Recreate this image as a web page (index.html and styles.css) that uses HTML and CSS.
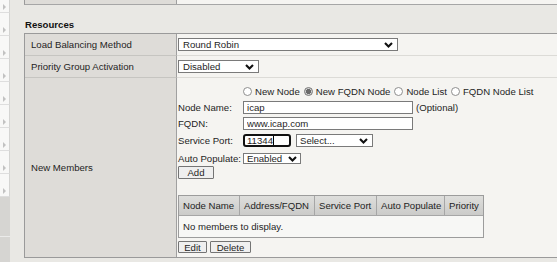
FILE: index.html
```html
<!DOCTYPE html>
<html lang="en">
<head>
<meta charset="utf-8">
<title>Resources</title>
<link rel="stylesheet" href="styles.css">
</head>
<body>
<div class="page">
  <nav class="sidebar">
    <div class="nav-item"><span class="arrow"></span></div>
    <div class="nav-item"><span class="arrow"></span></div>
    <div class="nav-item"><span class="arrow"></span></div>
    <div class="nav-item"><span class="arrow"></span></div>
    <div class="nav-item"><span class="arrow"></span></div>
    <div class="nav-item"><span class="arrow"></span></div>
    <div class="nav-item"><span class="arrow"></span></div>
    <div class="nav-item"><span class="arrow"></span></div>
    <div class="nav-item"><span class="arrow"></span></div>
    <div class="nav-block"></div>
    <div class="nav-block nav-block-last"></div>
  </nav>
  <main class="main">
    <div class="prev-table"><div class="prev-label"></div><div class="prev-value"></div></div>
    <h2 class="section-title">Resources</h2>
    <div class="props">
      <div class="prop-label">Load Balancing Method</div>
      <div class="prop-value">
        <div class="select select-lb"><span>Round Robin</span><svg class="chev" viewBox="0 0 9 6" width="9" height="6"><polyline points="1,1 4.5,4.5 8,1"/></svg></div>
      </div>
      <div class="prop-label">Priority Group Activation</div>
      <div class="prop-value">
        <div class="select select-pga"><span>Disabled</span><svg class="chev" viewBox="0 0 9 6" width="9" height="6"><polyline points="1,1 4.5,4.5 8,1"/></svg></div>
      </div>
      <div class="prop-label prop-last">New Members</div>
      <div class="prop-value prop-last members">
        <div class="radio-row">
          <span class="radio"></span><span class="radio-text">New Node</span>
          <span class="radio checked"></span><span class="radio-text">New FQDN Node</span>
          <span class="radio"></span><span class="radio-text">Node List</span>
          <span class="radio"></span><span class="radio-text">FQDN Node List</span>
        </div>
        <div class="form-row row-name">
          <span class="form-label">Node Name:</span>
          <input class="text-input wide" type="text" value="icap">
          <span class="hint">(Optional)</span>
        </div>
        <div class="form-row row-fqdn">
          <span class="form-label">FQDN:</span>
          <input class="text-input wide" type="text" value="www.icap.com">
        </div>
        <div class="form-row row-port">
          <span class="form-label">Service Port:</span>
          <div class="text-input port focused"><span class="caret">11344</span></div>
          <div class="select select-port"><span>Select...</span><svg class="chev" viewBox="0 0 9 6" width="9" height="6"><polyline points="1,1 4.5,4.5 8,1"/></svg></div>
        </div>
        <div class="form-row row-auto">
          <span class="form-label">Auto Populate:</span>
          <div class="select select-auto"><span>Enabled</span><svg class="chev" viewBox="0 0 9 6" width="9" height="6"><polyline points="1,1 4.5,4.5 8,1"/></svg></div>
        </div>
        <button class="btn btn-add" type="button">Add</button>
        <div class="members-table">
          <div class="th">Node Name</div>
          <div class="th">Address/FQDN</div>
          <div class="th">Service Port</div>
          <div class="th">Auto Populate</div>
          <div class="th th-last">Priority</div>
          <div class="td-empty">No members to display.</div>
        </div>
        <div class="btn-row">
          <button class="btn btn-edit" type="button">Edit</button>
          <button class="btn btn-delete" type="button">Delete</button>
        </div>
      </div>
    </div>
  </main>
</div>
</body>
</html>
```

FILE: styles.css
```css
* { box-sizing: border-box; }
html, body { margin: 0; padding: 0; }
body {
  width: 557px;
  height: 262px;
  overflow: hidden;
  background: #e9e8e4;
  font-family: "Liberation Sans", Arial, sans-serif;
  font-size: 9.6px;
  color: #1e1e1e;
}
.page { display: flex; align-items: flex-start; height: 262px; overflow: hidden; }

/* sidebar */
.sidebar {
  width: 10px;
  flex: none;
  display: flex;
  flex-direction: column;
  margin-top: -10px;
}
.nav-item {
  height: 23px;
  background: #f8f8f7;
  border-bottom: 1px solid #dedede;
  border-right: 1px solid #d4d4d2;
  padding: 14px 0 0 3px;
}
.arrow {
  display: block;
  width: 0; height: 0;
  border-left: 3px solid #c2c2c2;
  border-top: 3px solid transparent;
  border-bottom: 3px solid transparent;
}
.nav-block {
  height: 40px;
  background: #d6d5d2;
  border-bottom: 1px solid #ebebea;
}
.nav-block-last { height: 25px; border-bottom: none; }

/* main */
.main { flex: 1; margin-left: 14px; min-width: 0; }
.prev-table {
  display: grid;
  grid-template-columns: 152px 1fr;
  height: 5px;
  border-left: 1px solid #9a9a9a;
  border-bottom: 1px solid #a6a6a6;
}
.prev-label { background: #dedcd8; border-right: 1px solid #a0a0a0; }
.prev-value { background: #f5f4f1; }

.section-title {
  margin: 14px 0 0 1px;
  font-size: 9.6px;
  line-height: 12px;
  height: 12px;
  font-weight: bold;
  color: #111;
}

.props {
  margin-top: 2px;
  display: grid;
  grid-template-columns: 152px 1fr;
  border-top: 1px solid #9a9a9a;
  border-left: 1px solid #9a9a9a;
  border-bottom: 1px solid #9a9a9a;
}
.prop-label {
  height: 22px;
  background: #dedcd8;
  border-right: 1px solid #a0a0a0;
  border-bottom: 1px solid #c6c5c1;
  padding-left: 6px;
  display: flex;
  align-items: center;
}
.prop-value {
  height: 22px;
  background: #f5f4f1;
  border-bottom: 1px solid #dcdbd7;
  padding-left: 1px;
  display: flex;
  align-items: center;
}
.prop-label.prop-last, .prop-value.prop-last { height: 179px; border-bottom: none; }

/* selects */
.select {
  height: 13px;
  border: 1px solid #7a7a7a;
  background: #fff;
  padding: 0 4px 0 4px;
  display: flex;
  align-items: center;
  justify-content: space-between;
  white-space: nowrap;
}
.chev { fill: none; stroke: #111; stroke-width: 2.1; flex: none; }
.select-lb { width: 220px; }
.select-pga { width: 81px; }
.select-port { width: 77px; margin-left: 5px; padding-left: 3px; }
.select-auto { width: 58px; height: 11px; padding-left: 3px; padding-right: 3px; }

/* members cell */
.members {
  flex-direction: column;
  align-items: flex-start;
  justify-content: flex-start;
  padding-top: 7px;
  padding-bottom: 4px;
}
.radio-row {
  margin-left: 65px;
  height: 13px;
  display: flex;
  align-items: center;
  white-space: nowrap;
}
.radio {
  width: 9px; height: 9px;
  border-radius: 50%;
  border: 1px solid #8e8e8e;
  background: #fff;
  flex: none;
}
.radio.checked {
  background: radial-gradient(circle, #6b6b6b 0 2.3px, #d2d2d2 2.8px);
  border-color: #777;
}
.radio-text { margin: 0 4px 0 3px; }

.form-row { display: flex; align-items: center; white-space: nowrap; }
.row-name { margin-top: 3px; }
.row-fqdn { margin-top: 3px; }
.row-port { margin-top: 4px; }
.row-auto { margin-top: 6px; }
.form-label { width: 65px; flex: none; }
.text-input {
  height: 13px;
  border: 1px solid #7a7a7a;
  background: #fff;
  padding: 0 3px;
  margin: 0;
  font: inherit;
  color: #1e1e1e;
  outline: none;
  border-radius: 0;
}
.text-input.wide { width: 170px; }
.hint { margin-left: 3px; }
.text-input.port {
  width: 48px;
  border: 2px solid #111;
  border-radius: 3px;
  padding: 0 2px;
  display: flex;
  align-items: center;
}
.caret { border-right: 1px solid #000; line-height: 9px; }

.btn {
  height: 13px;
  margin: 0;
  padding: 0;
  font: inherit;
  color: #1e1e1e;
  background: #efefef;
  border: 1px solid #747474;
  border-radius: 1px;
  line-height: 11px;
}
.btn-add { width: 36px; margin-top: 2px; }

.members-table {
  margin-top: 16px;
  width: 306px;
  display: grid;
  grid-template-columns: 61px 75px 62px 68px 38px;
  border: 1px solid #9c9c9c;
}
.th {
  height: 20px;
  background: linear-gradient(#dededc, #cbcbc9);
  border-right: 1px solid #a6a6a6;
  border-bottom: 1px solid #a6a6a6;
  display: flex;
  align-items: center;
  padding-left: 4px;
  white-space: nowrap;
}
.th-last { border-right: none; }
.td-empty {
  grid-column: 1 / -1;
  height: 21px;
  background: #f7f7f5;
  display: flex;
  align-items: center;
  padding-left: 4px;
}
.btn-row { margin-top: 3px; display: flex; gap: 3px; }
.btn-edit { width: 29px; height: 12px; }
.btn-delete { width: 41px; height: 12px; }
```
